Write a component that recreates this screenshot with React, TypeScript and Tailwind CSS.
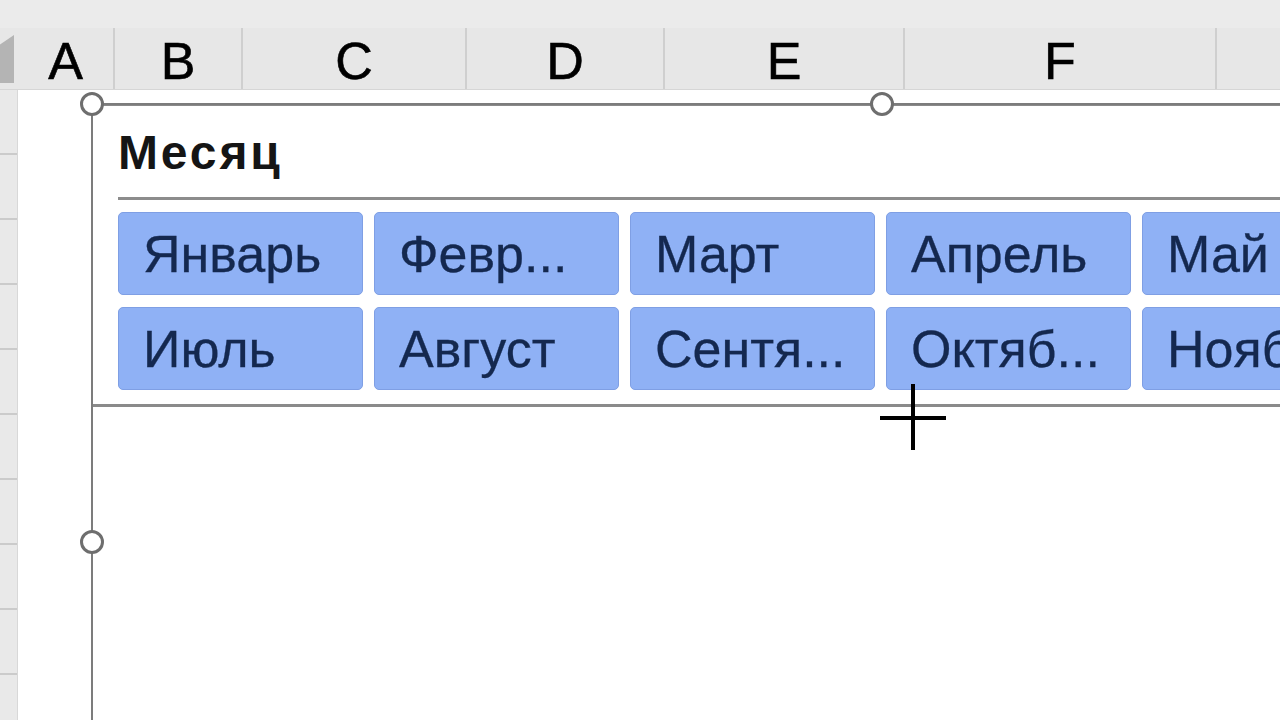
import React from "react";

const columns = [
  { label: "A", width: "w-[97px]" },
  { label: "B", width: "w-[128px]" },
  { label: "C", width: "w-[224px]" },
  { label: "D", width: "w-[198px]" },
  { label: "E", width: "w-[240px]" },
  { label: "F", width: "w-[312px]" },
  { label: "", width: "w-[120px]" },
];

const months = [
  ["Январь", "Февр...", "Март", "Апрель", "Май"],
  ["Июль", "Август", "Сентя...", "Октяб...", "Ноябрь"],
];

const Handle = ({ className }: { className: string }) => (
  <div
    className={`absolute w-[24px] h-[24px] rounded-full border-[3px] border-[#6e6e6e] bg-white ${className}`}
  />
);

const App = () => {
  return (
    <div
      className="relative w-[1280px] h-[720px] overflow-hidden bg-white"
      style={{ fontFamily: '"Liberation Sans", Arial, sans-serif' }}
    >
      {/* column headers */}
      <div className="h-[28px] bg-[#ebebeb]" />
      <div className="flex h-[62px] bg-[#e7e7e7] border-b border-[#d6d6d6]">
        <div className="w-[18px] shrink-0 h-full flex items-end pb-[6px]">
          <div className="w-[14px] h-[48px] bg-[#b4b4b4] [clip-path:polygon(100%_0,100%_100%,0_100%,0_20%)]" />
        </div>
        {columns.map((c, i) => (
          <div
            key={i}
            className={`${c.width} shrink-0 h-full flex items-center justify-center border-r-2 border-[#cfcfcf] text-[52px] leading-none text-black pt-[4px] [-webkit-text-stroke:0.6px_black]`}
          >
            {c.label}
          </div>
        ))}
      </div>

      {/* rows */}
      <div className="flex">
        <div className="w-[18px] shrink-0 bg-[#e9e9e9] border-r border-[#d8d8d8] flex flex-col">
          {Array.from({ length: 10 }).map((_, i) => (
            <div key={i} className="h-[65px] shrink-0 border-b-2 border-[#cbcbcb]" />
          ))}
        </div>
        <div className="flex-1 h-[630px]" />
      </div>

      {/* slicer */}
      <div className="absolute left-[92px] top-[104px] w-[1300px] bg-white border-t-2 border-b-[3px] border-[#8a8a8a] pl-[26px] pt-[14px] pb-[14px]">
        <div className="text-[48px] font-bold leading-none text-[#151515] tracking-[0.06em] pb-[20px] pt-[9px]">
          Месяц
        </div>
        <div className="h-[3px] bg-[#8c8c8c] mb-[12px]" />
        <div className="flex flex-col gap-[12px]">
          {months.map((row, r) => (
            <div key={r} className="flex gap-[11px]">
              {row.map((m) => (
                <div
                  key={m}
                  className="w-[245px] h-[83px] shrink-0 rounded-[5px] bg-[#8fb1f5] border border-[#7f9fe4] flex items-center pl-[24px] text-[52px] leading-none text-[#14284f] whitespace-nowrap overflow-hidden [-webkit-text-stroke:0.3px_#14284f]"
                >
                  {m}
                </div>
              ))}
            </div>
          ))}
        </div>
      </div>

      {/* selection frame */}
      <div className="absolute left-[91px] top-[103px] w-[1580px] h-[876px] border-l-2 border-t-2 border-[#7c7c7c] pointer-events-none" />
      <Handle className="left-[80px] top-[92px]" />
      <Handle className="left-[870px] top-[92px]" />
      <Handle className="left-[80px] top-[530px]" />

      {/* crosshair cursor */}
      <svg className="absolute left-[878px] top-[382px]" width="70" height="70" viewBox="0 0 70 70">
        <path d="M35 2V68M2 36H68" stroke="#000" strokeWidth="4" />
      </svg>
    </div>
  );
};

export default App;
